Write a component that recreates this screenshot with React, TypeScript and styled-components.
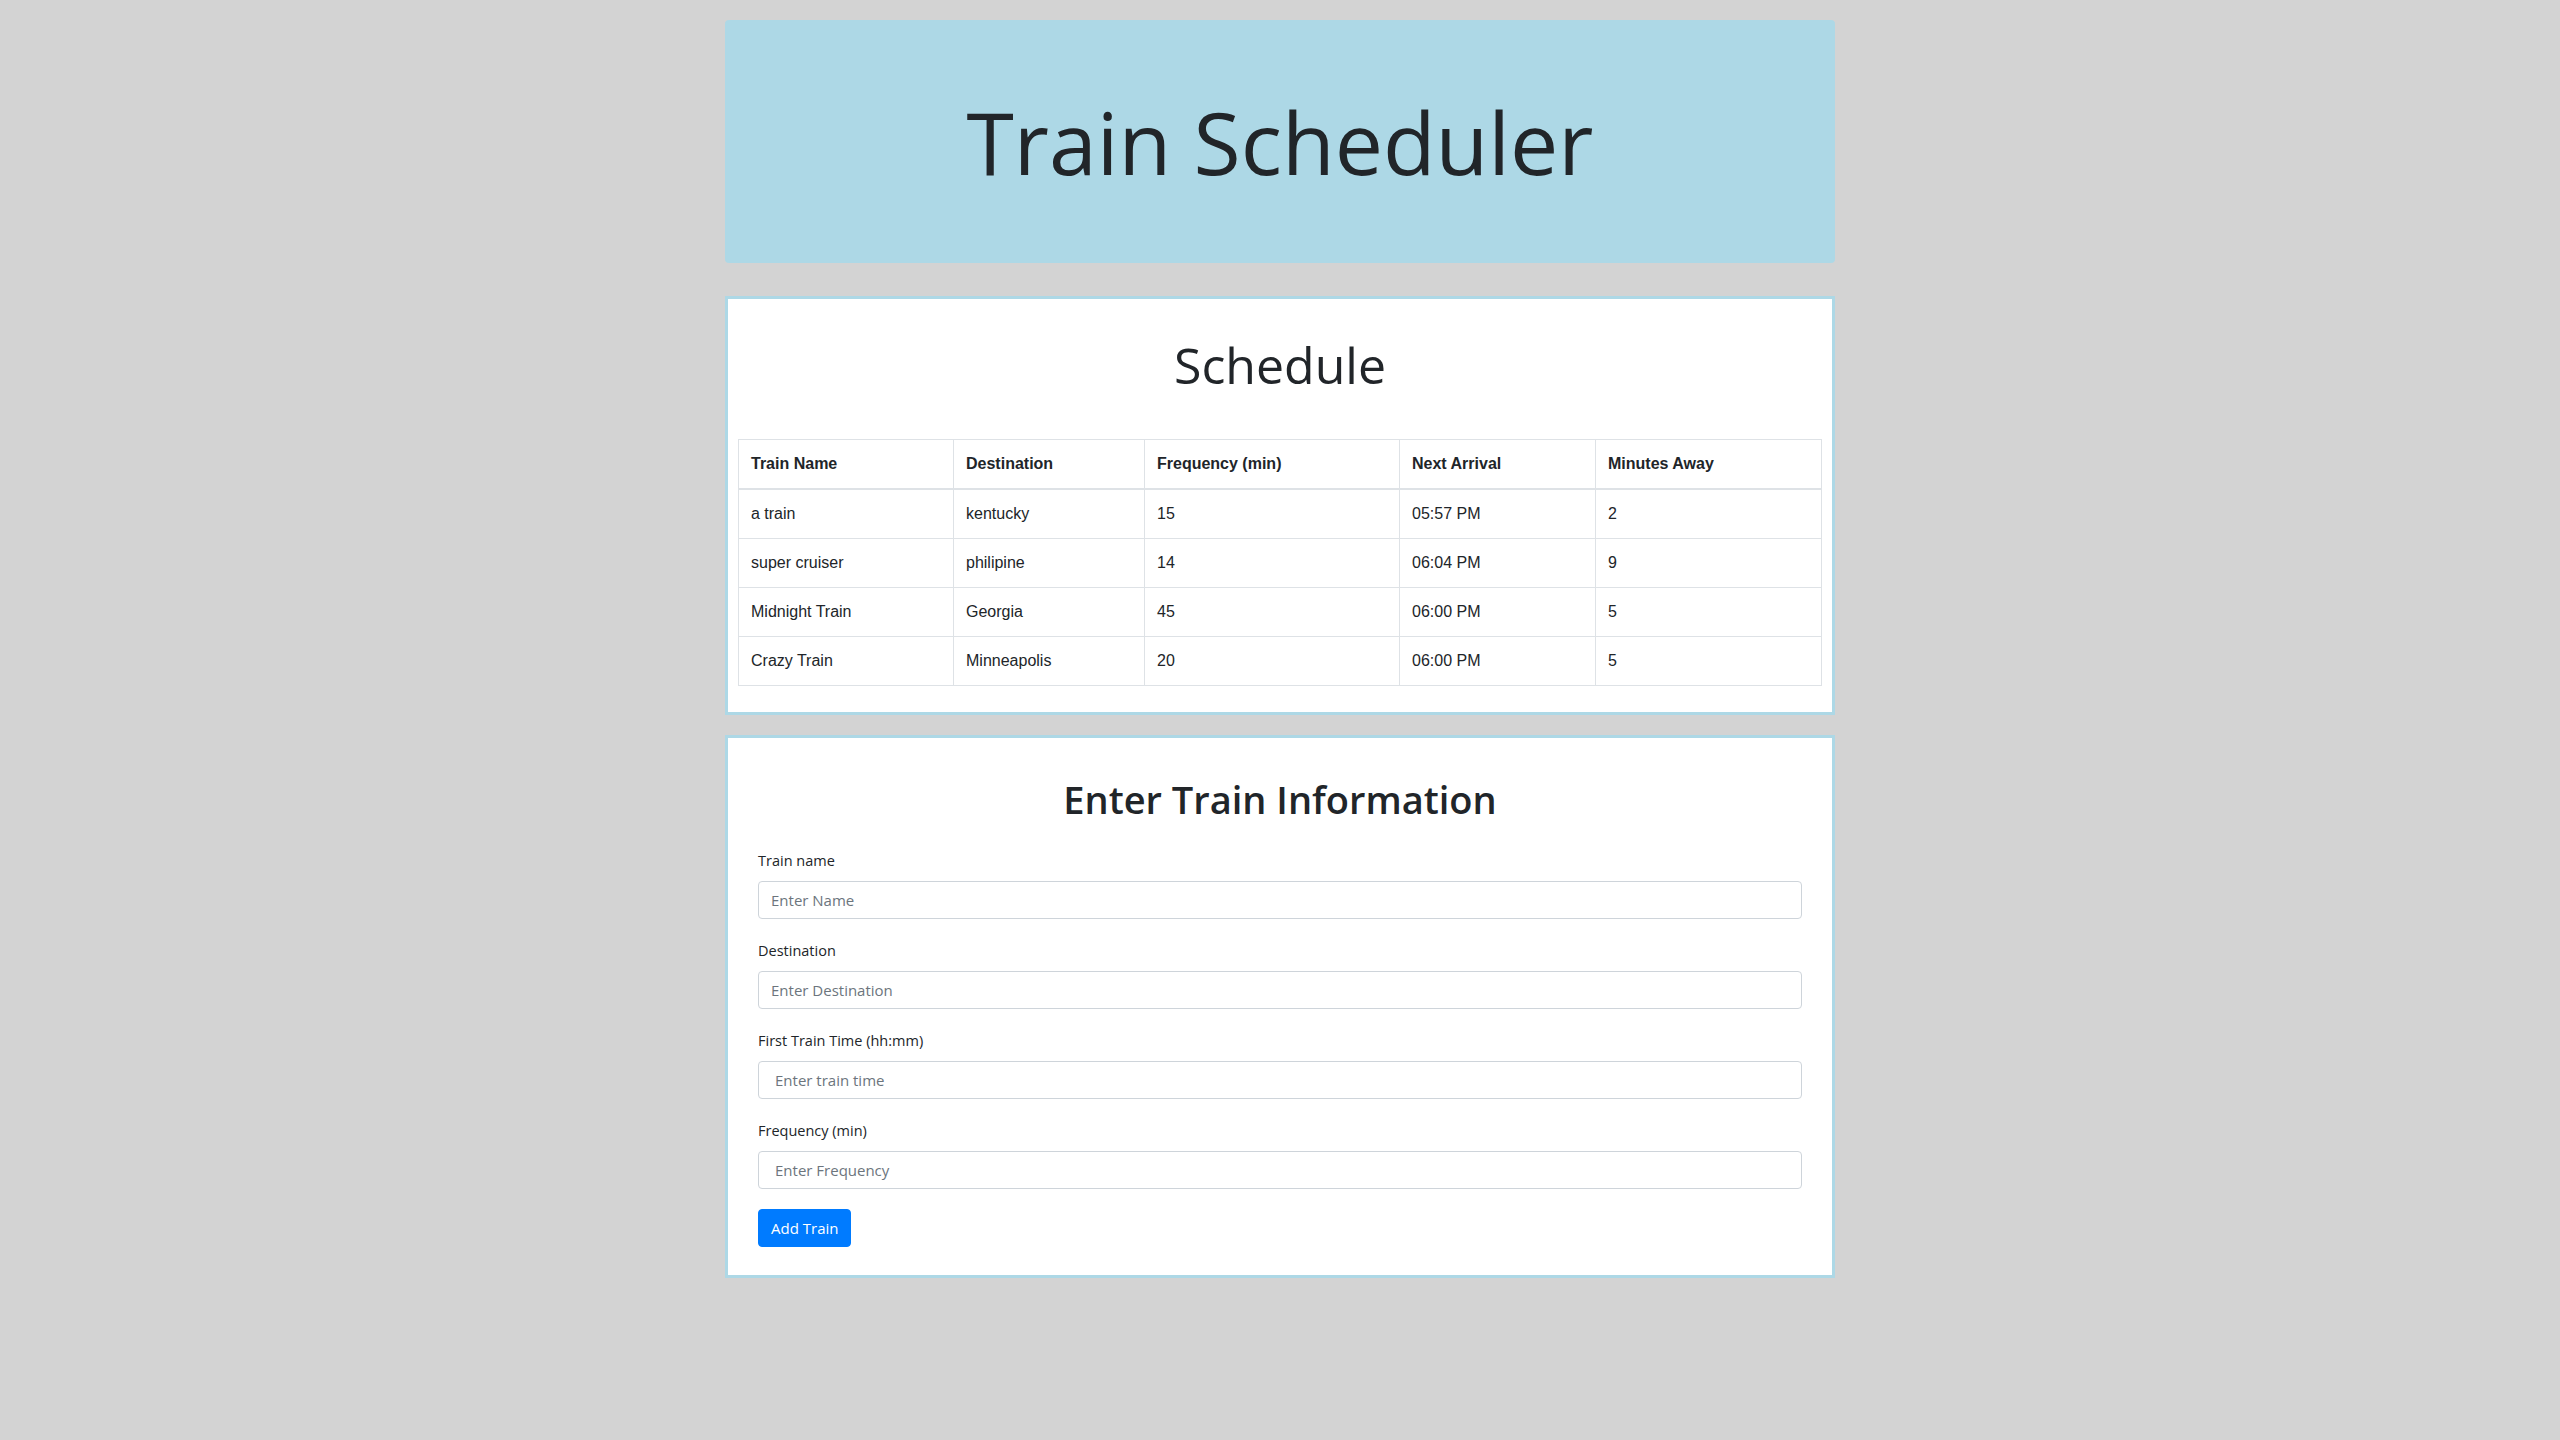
import React from 'react';
import styled, { createGlobalStyle } from 'styled-components';

const GlobalStyle = createGlobalStyle`
  body {
    margin: 0;
    background: #d3d3d3;
    color: #212529;
    font-family: "Open Sans", "Noto Sans", sans-serif;
  }
  * {
    box-sizing: border-box;
  }
`;

const Container = styled.div`
  width: 1110px;
  margin: 20px auto 0;
`;

const Jumbotron = styled.header`
  background: #add8e6;
  border-radius: 4px;
  padding: 64px 32px;
  margin-bottom: 33px;
  text-align: center;
`;

const Title = styled.h1`
  margin: 0;
  font-size: 86px;
  line-height: 115px;
  font-weight: 400;
  color: #212529;
`;

const Card = styled.section<{ gapBelow?: number }>`
  background: #fff;
  border: 3px solid #add8e6;
  padding: 10px;
  margin-bottom: ${props => props.gapBelow ?? 0}px;
`;

const SectionTitle = styled.h2<{ bold?: boolean }>`
  text-align: center;
  font-size: ${props => props.bold ? '38px' : '50px'};
  font-weight: ${props => props.bold ? 600 : 400};
  line-height: 1.2;
  margin: ${props => props.bold ? '29px 0 26px' : '26px 0 44px'};
  color: #212529;
`;

const Table = styled.table`
  width: 100%;
  border-collapse: collapse;
  margin-bottom: 16px;
  font-family: "Liberation Sans", Arial, sans-serif;
  font-size: 16px;
  color: #212529;
`;

const HeadCell = styled.th<{ w?: number }>`
  width: ${props => props.w ? `${props.w}px` : 'auto'};
  text-align: left;
  font-weight: 700;
  padding: 12px;
  line-height: 24px;
  border: 1px solid #dee2e6;
  border-bottom-width: 2px;
`;

const Cell = styled.td`
  padding: 12px;
  line-height: 24px;
  border: 1px solid #dee2e6;
`;

const Form = styled.form`
  padding: 0 20px 18px;
`;

const FormGroup = styled.div`
  display: flex;
  flex-direction: column;
  margin-bottom: 20px;
`;

const Label = styled.label`
  font-size: 14.5px;
  line-height: 24px;
  margin-bottom: 8px;
  color: #212529;
`;

const Input = styled.input<{ wide?: boolean }>`
  height: 38px;
  padding: 6px ${props => props.wide ? '16px' : '12px'};
  font-family: "Open Sans", "Noto Sans", sans-serif;
  font-size: 15px;
  color: #495057;
  border: 1px solid #ced4da;
  border-radius: 4px;
  background: #fff;

  &::placeholder {
    color: #6c757d;
  }
`;

const Button = styled.button`
  height: 38px;
  padding: 0 12px;
  background: #007bff;
  color: #fff;
  border: 1px solid #007bff;
  border-radius: 4px;
  font-family: "Open Sans", "Noto Sans", sans-serif;
  font-size: 15px;
  cursor: pointer;
`;

interface Train {
  name: string;
  destination: string;
  frequency: number;
  next: string;
  away: number;
}

const trains: Train[] = [
  { name: 'a train', destination: 'kentucky', frequency: 15, next: '05:57 PM', away: 2 },
  { name: 'super cruiser', destination: 'philipine', frequency: 14, next: '06:04 PM', away: 9 },
  { name: 'Midnight Train', destination: 'Georgia', frequency: 45, next: '06:00 PM', away: 5 },
  { name: 'Crazy Train', destination: 'Minneapolis', frequency: 20, next: '06:00 PM', away: 5 },
];

const fields = [
  { id: 'name', label: 'Train name', placeholder: 'Enter Name', wide: false },
  { id: 'dest', label: 'Destination', placeholder: 'Enter Destination', wide: false },
  { id: 'time', label: 'First Train Time (hh:mm)', placeholder: 'Enter train time', wide: true },
  { id: 'freq', label: 'Frequency (min)', placeholder: 'Enter Frequency', wide: true },
];

const App: React.FC = () => {
  return (
    <>
      <GlobalStyle />
      <Container>
        <Jumbotron>
          <Title>Train Scheduler</Title>
        </Jumbotron>

        <Card gapBelow={20}>
          <SectionTitle>Schedule</SectionTitle>
          <Table>
            <thead>
              <tr>
                <HeadCell w={215}>Train Name</HeadCell>
                <HeadCell w={191}>Destination</HeadCell>
                <HeadCell w={255}>Frequency (min)</HeadCell>
                <HeadCell w={196}>Next Arrival</HeadCell>
                <HeadCell>Minutes Away</HeadCell>
              </tr>
            </thead>
            <tbody>
              {trains.map(train => (
                <tr key={train.name}>
                  <Cell>{train.name}</Cell>
                  <Cell>{train.destination}</Cell>
                  <Cell>{train.frequency}</Cell>
                  <Cell>{train.next}</Cell>
                  <Cell>{train.away}</Cell>
                </tr>
              ))}
            </tbody>
          </Table>
        </Card>

        <Card>
          <Form onSubmit={e => e.preventDefault()}>
            <SectionTitle bold>Enter Train Information</SectionTitle>
            {fields.map(field => (
              <FormGroup key={field.id}>
                <Label htmlFor={field.id}>{field.label}</Label>
                <Input id={field.id} type="text" placeholder={field.placeholder} wide={field.wide} />
              </FormGroup>
            ))}
            <Button type="submit">Add Train</Button>
          </Form>
        </Card>
      </Container>
    </>
  );
};

export default App;
